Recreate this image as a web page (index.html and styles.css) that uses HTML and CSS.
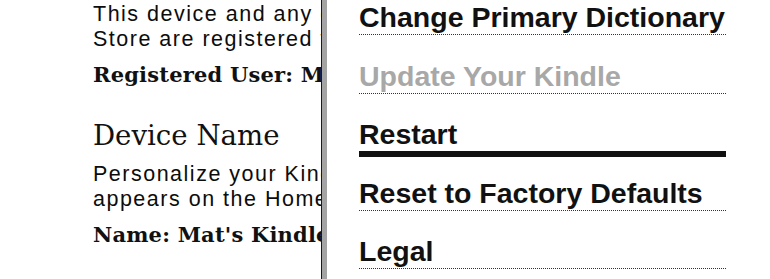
FILE: index.html
```html
<!DOCTYPE html>
<html>
<head>
<meta charset="utf-8">
<link rel="stylesheet" href="styles.css">
</head>
<body>
<div class="screen">
  <section class="page">
    <p class="body-text">This device and any content purchased from the Kindle<br>Store are registered to:</p>
    <p class="value">Registered User: Mat Honan</p>
    <h2 class="heading">Device Name</h2>
    <p class="body-text">Personalize your Kindle by changing its name, which<br>appears on the Home screen.</p>
    <p class="value value-name">Name: Mat's Kindle</p>
  </section>
  <nav class="menu">
    <ul class="menu-body">
      <li class="menu-item">Change Primary Dictionary</li>
      <li class="menu-item is-disabled">Update Your Kindle</li>
      <li class="menu-item is-selected">Restart</li>
      <li class="menu-item">Reset to Factory Defaults</li>
      <li class="menu-item">Legal</li>
    </ul>
  </nav>
</div>
</body>
</html>
```

FILE: styles.css
```css
html, body {
  margin: 0;
  padding: 0;
  background: #ffffff;
}

.screen {
  display: flex;
  width: 770px;
  height: 279px;
  overflow: hidden;
  color: #111111;
}

.page {
  flex: none;
  width: 321px;
  box-sizing: border-box;
  padding: 1.5px 0 0 93px;
  overflow: hidden;
  white-space: nowrap;
}

.body-text {
  margin: 0;
  font-family: "Liberation Sans", Arial, sans-serif;
  font-size: 21.5px;
  line-height: 25px;
  letter-spacing: 1.5px;
  color: #0c0c0c;
}

.value {
  margin: 11.5px 0 0;
  font-family: "DejaVu Serif", serif;
  font-weight: 700;
  font-size: 21px;
  line-height: 24px;
  letter-spacing: 0.2px;
}

.value-name {
  margin-top: 11px;
}

.heading {
  margin: 32.8px 0 10px;
  font-family: "DejaVu Serif", serif;
  font-weight: 400;
  font-size: 27.6px;
  line-height: 32px;
}

.menu {
  flex: 1;
  border-left: 1px solid #1a1a1a;
  background: #ffffff;
}

.menu-body {
  list-style: none;
  margin: 0;
  height: 100%;
  border-left: 5px solid #a4a4a4;
  padding: 0 44px 0 32px;
}

.menu-item {
  padding: 24.5px 0 1px;
  font-family: "Liberation Sans", Arial, sans-serif;
  font-weight: 700;
  font-size: 28.5px;
  line-height: 32px;
  white-space: nowrap;
  border-bottom: 1px dotted #333333;
}

.menu-item:first-child {
  padding-top: 1px;
}

.is-disabled {
  color: #a8a8a8;
}

.is-selected {
  border-bottom: 1px solid #111111;
  box-shadow: 0 5px 0 #111111;
}
```
